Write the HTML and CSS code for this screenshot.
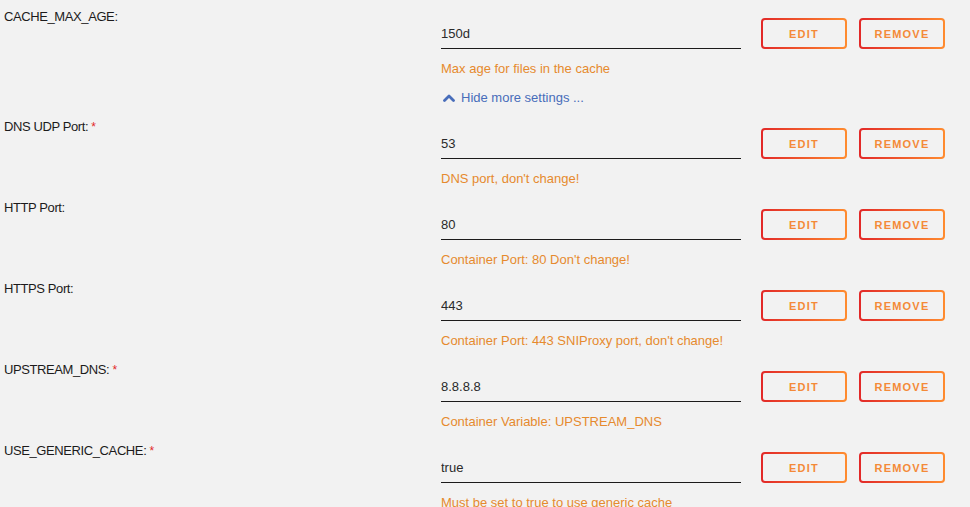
FILE: index.html
```html
<!DOCTYPE html>
<html lang="en">
<head>
<meta charset="utf-8">
<title>Container settings</title>
<link rel="stylesheet" href="styles.css">
</head>
<body>
<div class="settings">
  <div class="row">
    <div class="label">CACHE_MAX_AGE:</div>
    <div class="field">
      <input class="value" type="text" value="150d">
      <div class="help">Max age for files in the cache</div>
      <a class="toggle" href="#"><svg class="chev" width="12" height="8" viewBox="0 0 12 8"><polyline points="1.5,6.5 6,2 10.5,6.5" fill="none" stroke="#486dba" stroke-width="2.8" stroke-linecap="round" stroke-linejoin="round"/></svg>Hide more settings ...</a>
    </div>
    <div class="actions"><button class="btn">EDIT</button><button class="btn">REMOVE</button></div>
  </div>
  <div class="row">
    <div class="label">DNS UDP Port: <span class="req">*</span></div>
    <div class="field">
      <input class="value" type="text" value="53">
      <div class="help">DNS port, don't change!</div>
    </div>
    <div class="actions"><button class="btn">EDIT</button><button class="btn">REMOVE</button></div>
  </div>
  <div class="row">
    <div class="label">HTTP Port:</div>
    <div class="field">
      <input class="value" type="text" value="80">
      <div class="help">Container Port: 80 Don't change!</div>
    </div>
    <div class="actions"><button class="btn">EDIT</button><button class="btn">REMOVE</button></div>
  </div>
  <div class="row">
    <div class="label">HTTPS Port:</div>
    <div class="field">
      <input class="value" type="text" value="443">
      <div class="help">Container Port: 443 SNIProxy port, don't change!</div>
    </div>
    <div class="actions"><button class="btn">EDIT</button><button class="btn">REMOVE</button></div>
  </div>
  <div class="row">
    <div class="label">UPSTREAM_DNS: <span class="req">*</span></div>
    <div class="field">
      <input class="value" type="text" value="8.8.8.8">
      <div class="help">Container Variable: UPSTREAM_DNS</div>
    </div>
    <div class="actions"><button class="btn">EDIT</button><button class="btn">REMOVE</button></div>
  </div>
  <div class="row">
    <div class="label">USE_GENERIC_CACHE: <span class="req">*</span></div>
    <div class="field">
      <input class="value" type="text" value="true">
      <div class="help">Must be set to true to use generic cache</div>
    </div>
    <div class="actions"><button class="btn">EDIT</button><button class="btn">REMOVE</button></div>
  </div>
</div>
</body>
</html>
```
FILE: styles.css
```css
html, body {
  margin: 0;
  padding: 0;
  background: #f2f2f2;
}
body {
  font-family: "Liberation Sans", Arial, sans-serif;
  font-size: 13px;
  color: #1c1b1b;
  overflow: hidden;
}
.settings {
  padding-left: 4px;
}
.row {
  display: flex;
  align-items: flex-start;
  padding-bottom: 4px;
}
.label {
  width: 437px;
  flex: none;
  padding-top: 9px;
  line-height: 16px;
  letter-spacing: -0.4px;
  color: #1c1b1b;
}
.req {
  color: #e22828;
  font-size: 12px;
  letter-spacing: 0;
}
.field {
  width: 300px;
  flex: none;
  padding-top: 18px;
  display: flex;
  flex-direction: column;
  align-items: flex-start;
}
.value {
  box-sizing: border-box;
  width: 300px;
  height: 31px;
  margin: 0;
  padding: 0;
  border: 0;
  border-bottom: 1px solid #1c1b1b;
  background: transparent;
  font-family: inherit;
  font-size: 13px;
  color: #2a2a2a;
  outline: none;
}
.help {
  margin-top: 12px;
  line-height: 16px;
  color: #e68a2e;
  white-space: nowrap;
}
.toggle {
  margin-top: 13px;
  line-height: 16px;
  color: #486dba;
  text-decoration: none;
  display: flex;
  align-items: center;
}
.chev {
  margin-left: 2px;
  margin-right: 6px;
}
.actions {
  display: flex;
  gap: 12px;
  margin-left: 20px;
  padding-top: 18px;
}
.btn {
  box-sizing: border-box;
  width: 86px;
  height: 31px;
  margin: 0;
  padding: 0;
  border: 2px solid transparent;
  border-radius: 4px;
  background: linear-gradient(#f2f2f2, #f2f2f2) padding-box,
              linear-gradient(90deg, #e22828, #ff8c2f) border-box;
  font-family: "Liberation Sans", Arial, sans-serif;
  font-size: 11px;
  font-weight: bold;
  letter-spacing: 1.2px;
  color: #f48a38;
  cursor: pointer;
}
```
